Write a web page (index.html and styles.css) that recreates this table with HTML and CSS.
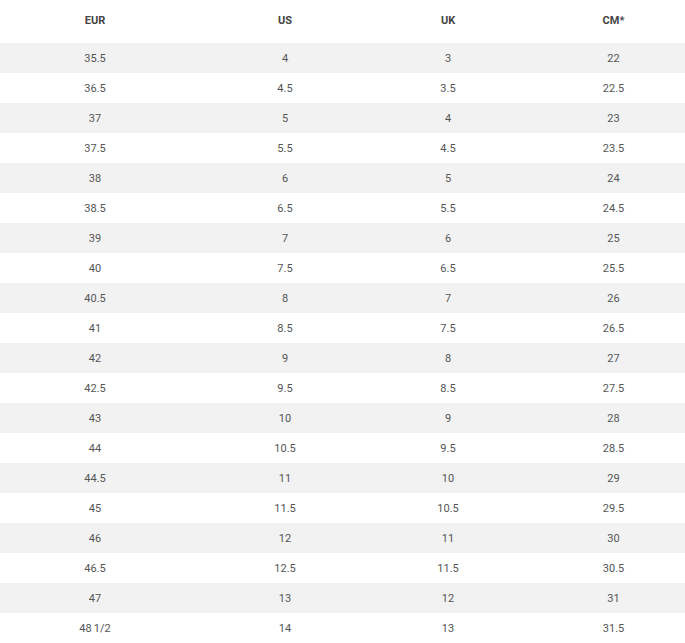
FILE: index.html
```html
<!DOCTYPE html>
<html lang="en">
<head>
<meta charset="utf-8">
<title>Size chart</title>
<link rel="stylesheet" href="styles.css">
</head>
<body>
<div class="chart">
  <div class="row head"><div class="cell">EUR</div><div class="cell">US</div><div class="cell">UK</div><div class="cell last">CM*</div></div>
  <div class="row"><div class="cell">35.5</div><div class="cell">4</div><div class="cell">3</div><div class="cell last">22</div></div>
  <div class="row"><div class="cell">36.5</div><div class="cell">4.5</div><div class="cell">3.5</div><div class="cell last">22.5</div></div>
  <div class="row"><div class="cell">37</div><div class="cell">5</div><div class="cell">4</div><div class="cell last">23</div></div>
  <div class="row"><div class="cell">37.5</div><div class="cell">5.5</div><div class="cell">4.5</div><div class="cell last">23.5</div></div>
  <div class="row"><div class="cell">38</div><div class="cell">6</div><div class="cell">5</div><div class="cell last">24</div></div>
  <div class="row"><div class="cell">38.5</div><div class="cell">6.5</div><div class="cell">5.5</div><div class="cell last">24.5</div></div>
  <div class="row"><div class="cell">39</div><div class="cell">7</div><div class="cell">6</div><div class="cell last">25</div></div>
  <div class="row"><div class="cell">40</div><div class="cell">7.5</div><div class="cell">6.5</div><div class="cell last">25.5</div></div>
  <div class="row"><div class="cell">40.5</div><div class="cell">8</div><div class="cell">7</div><div class="cell last">26</div></div>
  <div class="row"><div class="cell">41</div><div class="cell">8.5</div><div class="cell">7.5</div><div class="cell last">26.5</div></div>
  <div class="row"><div class="cell">42</div><div class="cell">9</div><div class="cell">8</div><div class="cell last">27</div></div>
  <div class="row"><div class="cell">42.5</div><div class="cell">9.5</div><div class="cell">8.5</div><div class="cell last">27.5</div></div>
  <div class="row"><div class="cell">43</div><div class="cell">10</div><div class="cell">9</div><div class="cell last">28</div></div>
  <div class="row"><div class="cell">44</div><div class="cell">10.5</div><div class="cell">9.5</div><div class="cell last">28.5</div></div>
  <div class="row"><div class="cell">44.5</div><div class="cell">11</div><div class="cell">10</div><div class="cell last">29</div></div>
  <div class="row"><div class="cell">45</div><div class="cell">11.5</div><div class="cell">10.5</div><div class="cell last">29.5</div></div>
  <div class="row"><div class="cell">46</div><div class="cell">12</div><div class="cell">11</div><div class="cell last">30</div></div>
  <div class="row"><div class="cell">46.5</div><div class="cell">12.5</div><div class="cell">11.5</div><div class="cell last">30.5</div></div>
  <div class="row"><div class="cell">47</div><div class="cell">13</div><div class="cell">12</div><div class="cell last">31</div></div>
  <div class="row"><div class="cell">48&#8201;1/2</div><div class="cell">14</div><div class="cell">13</div><div class="cell last">31.5</div></div>
</div>
</body>
</html>
```
FILE: styles.css
```css
html, body {
  margin: 0;
  padding: 0;
  background: #ffffff;
}
body {
  font-family: Roboto, "Liberation Sans", sans-serif;
  font-size: 11px;
  color: #555555;
  overflow: hidden;
}
.chart {
  width: 685px;
  display: flex;
  flex-direction: column;
}
.row {
  display: grid;
  grid-template-columns: 190px 190px 136px 169px;
  height: 30px;
  padding-top: 2px;
  box-sizing: border-box;
  align-items: center;
}
.row:nth-child(even) {
  background: #f2f2f2;
}
.row.head {
  height: 43px;
  padding-top: 0;
  padding-bottom: 1px;
  font-weight: 700;
  color: #444444;
}
.cell {
  text-align: center;
  line-height: 14px;
}
.cell.last {
  padding-left: 26px;
}
```
